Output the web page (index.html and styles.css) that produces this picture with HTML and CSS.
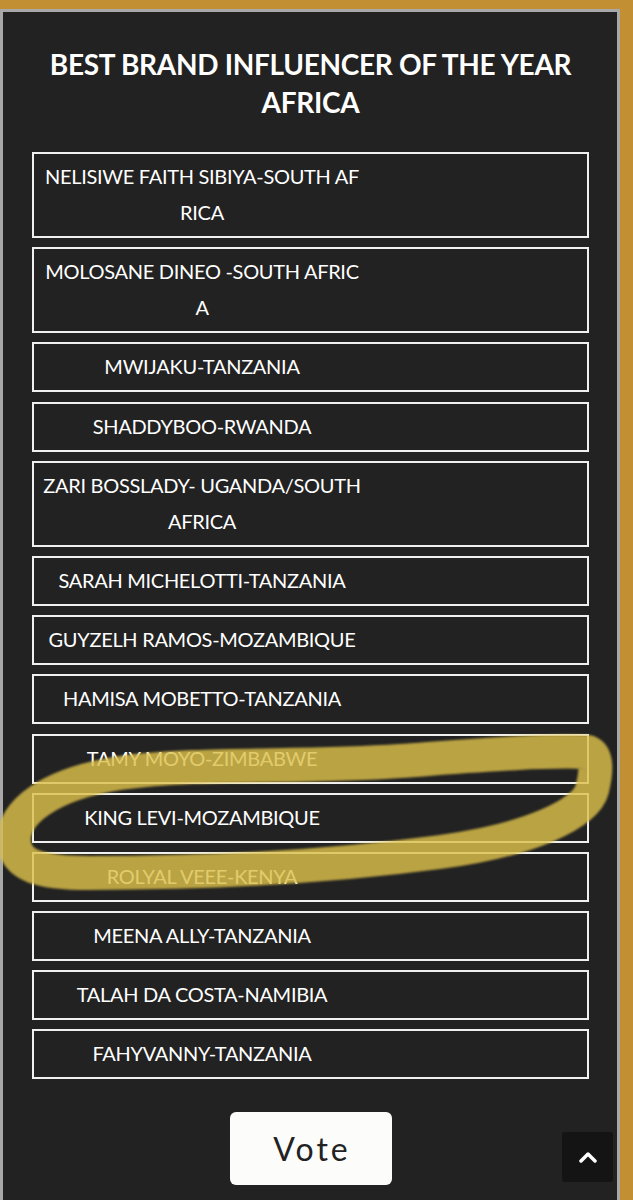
FILE: index.html
```html
<!DOCTYPE html>
<html lang="en">
<head>
  <meta charset="UTF-8">
  <title>Best Brand Influencer of the Year Africa</title>
  <link rel="stylesheet" href="styles.css">
</head>
<body>

<div class="panel">
  <h2 class="title">BEST BRAND INFLUENCER OF THE YEAR AFRICA</h2>

  <ul class="nominees">
    <li class="nominee"><span class="label">NELISIWE FAITH SIBIYA-SOUTH AFRICA</span></li>
    <li class="nominee"><span class="label">MOLOSANE DINEO -SOUTH AFRICA</span></li>
    <li class="nominee"><span class="label">MWIJAKU-TANZANIA</span></li>
    <li class="nominee"><span class="label">SHADDYBOO-RWANDA</span></li>
    <li class="nominee"><span class="label">ZARI BOSSLADY- UGANDA/SOUTH AFRICA</span></li>
    <li class="nominee"><span class="label">SARAH MICHELOTTI-TANZANIA</span></li>
    <li class="nominee"><span class="label">GUYZELH RAMOS-MOZAMBIQUE</span></li>
    <li class="nominee"><span class="label">HAMISA MOBETTO-TANZANIA</span></li>
    <li class="nominee"><span class="label">TAMY MOYO-ZIMBABWE</span></li>
    <li class="nominee"><span class="label">KING LEVI-MOZAMBIQUE</span></li>
    <li class="nominee"><span class="label">ROLYAL VEEE-KENYA</span></li>
    <li class="nominee"><span class="label">MEENA ALLY-TANZANIA</span></li>
    <li class="nominee"><span class="label">TALAH DA COSTA-NAMIBIA</span></li>
    <li class="nominee"><span class="label">FAHYVANNY-TANZANIA</span></li>
  </ul>

  <div class="actions">
    <button class="vote-btn">Vote</button>
  </div>
</div>

<!-- marker scribble drawn over the list -->
<svg class="scribble" viewBox="0 0 633 1200" aria-hidden="true">
  <path d="M588 752 C540 750 470 756 400 761 C300 768 200 762 120 773 C50 784 12 812 14 842 C16 866 40 873 90 873 C200 873 320 868 440 852 C530 840 585 814 592 790 C597 770 597 756 588 752 Z" />
</svg>

<button class="to-top" aria-label="Back to top">
  <svg viewBox="0 0 20 12"><path d="M3 10 L10 3 L17 10" /></svg>
</button>

</body>
</html>
```

FILE: styles.css
```css
body {
  margin: 0;
  padding: 9px 13px 0 0;
  background-color: #c28f33;
  font-family: "Lato", "Open Sans", sans-serif;
  position: relative;
  min-height: 1191px;
}

.panel {
  background-color: #222222;
  border: 3px solid #a8a8a8;
  border-bottom: none;
  min-height: 1191px;
  box-sizing: border-box;
  padding: 33px 28px 0 29px;
}

.title {
  margin: 0 0 31px 0;
  color: #ffffff;
  font-size: 28px;
  font-weight: 700;
  line-height: 38px;
  letter-spacing: -0.3px;
  text-align: center;
}

.nominees {
  list-style: none;
  margin: 0;
  padding: 0;
  display: flex;
  flex-direction: column;
  gap: 9.2px;
}

.nominee {
  border: 2px solid #f0f0f0;
  padding: 4px 9px 6px 9px;
  color: #ffffff;
  font-size: 20px;
  line-height: 36px;
  letter-spacing: -0.3px;
}

.label {
  display: block;
  width: 318px;
  text-align: center;
  word-break: break-all;
}

.actions {
  display: flex;
  justify-content: center;
  padding-top: 33px;
}

.vote-btn {
  width: 162px;
  height: 73px;
  border: none;
  border-radius: 6px;
  background-color: #fcfcfa;
  color: #222222;
  font-family: "Lato", sans-serif;
  font-size: 32px;
  letter-spacing: 3px;
  padding: 0 0 0 3px;
  cursor: pointer;
}

.scribble {
  position: absolute;
  top: 0;
  left: 0;
  width: 633px;
  height: 1200px;
  pointer-events: none;
  filter: blur(0.8px);
}

.scribble path {
  fill: none;
  stroke: #dcbf4a;
  stroke-opacity: 0.82;
  stroke-width: 34;
  stroke-linejoin: round;
}

.to-top {
  position: absolute;
  right: 20px;
  bottom: 18px;
  width: 51px;
  height: 50px;
  border: none;
  border-radius: 3px;
  background-color: #141414;
  display: flex;
  align-items: center;
  justify-content: center;
  padding: 0;
  cursor: pointer;
}

.to-top svg {
  width: 20px;
  height: 12px;
}

.to-top path {
  fill: none;
  stroke: #ffffff;
  stroke-width: 3.5;
  stroke-linecap: round;
  stroke-linejoin: round;
}
```
